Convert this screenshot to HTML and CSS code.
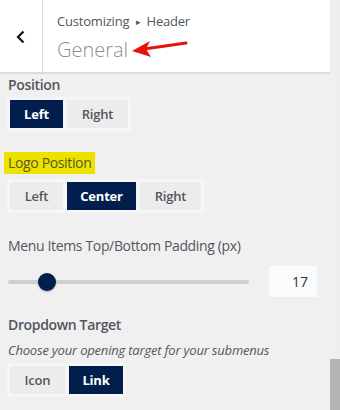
FILE: index.html
```html
<!DOCTYPE html>
<html>
<head>
<meta charset="utf-8">
<link rel="stylesheet" href="styles.css">
</head>
<body>
<div class="frame">
  <div class="panel">
    <header class="head">
      <div class="back">
        <svg width="12" height="16" viewBox="0 0 12 16"><path d="M8.5 2.5 L3 8 L8.5 13.5" fill="none" stroke="#111" stroke-width="2.2"/></svg>
      </div>
      <div class="titles">
        <div class="crumb">Customizing <span class="tri">▸</span> Header</div>
        <div class="title">General</div>
      </div>
      <svg class="arrow" width="60" height="20" viewBox="0 0 60 20"><path d="M56 3 L14 9" stroke="#e8120c" stroke-width="3" stroke-linecap="round"/><path d="M2 11 L20 1 L16 9 L21 17 Z" fill="#e8120c"/></svg>
    </header>

    <section class="ctl c-pos">
      <div class="label">Position</div>
      <div class="group">
        <span class="btn on w53">Left</span>
        <span class="btn w61">Right</span>
      </div>
    </section>

    <section class="ctl c-logo">
      <div class="label"><span class="hl">Logo Position</span></div>
      <div class="group">
        <span class="btn w53">Left</span>
        <span class="btn on w69">Center</span>
        <span class="btn w61">Right</span>
      </div>
    </section>

    <section class="ctl c-slider">
      <div class="label">Menu Items Top/Bottom Padding (px)</div>
      <div class="slider-row">
        <div class="track"><span class="thumb"></span></div>
        <div class="num">17</div>
      </div>
    </section>

    <section class="ctl c-drop">
      <div class="label">Dropdown Target</div>
      <div class="desc">Choose your opening target for your submenus</div>
      <div class="group">
        <span class="btn w55">Icon</span>
        <span class="btn on w54">Link</span>
      </div>
    </section>
  </div>
  <div class="scroll"><span class="sthumb"></span></div>
</div>
</body>
</html>
```

FILE: styles.css
```css
* { box-sizing: border-box; }
html, body { margin: 0; padding: 0; }
body {
  width: 340px;
  height: 410px;
  overflow: hidden;
  background: #f0f0f1;
  font-family: "Open Sans", "Noto Sans", sans-serif;
  color: #50575e;
}
.frame { display: flex; width: 340px; height: 410px; }
.panel { width: 330px; display: flex; flex-direction: column; }
.scroll { width: 10px; display: flex; flex-direction: column; background: #efefef; }
.sthumb { margin-top: auto; height: 51px; background: #b3b3b3; display: block; }

.head {
  position: relative;
  height: 74px;
  background: #fff;
  border-bottom: 2px solid #dcdcde;
  display: flex;
}
.back {
  width: 43px;
  border-right: 1px solid #dcdcde;
  display: flex;
  align-items: center;
  justify-content: center;
  padding-top: 2px;
}
.titles { padding: 11px 0 0 14px; }
.crumb { font-size: 13px; line-height: 20px; color: #50575e; letter-spacing: -0.2px; }
.tri { font-size: 9px; display: inline-block; vertical-align: 1px; margin: 0 3px; }
.title { font-size: 20px; line-height: 26px; color: #8c8f94; font-weight: 300; margin-top: 5px; }
.arrow { position: absolute; left: 130px; top: 40px; }

.ctl { padding: 0 0 0 7px; }
.label { font-size: 14px; font-weight: 600; line-height: 20px; padding-left: 1px; letter-spacing: -0.35px; }
.c-pos { padding-top: 0; }
.c-pos .label { margin-top: 1px; }
.c-pos .group { margin-top: 2px; }
.c-logo { margin-top: 21px; }
.c-logo .label { margin-left: -4px; }
.hl { background: #ede100; color: #585a1c; display: inline-block; padding: 1px 4px 1px 4px; line-height: 20px; font-weight: 400; }
.c-logo .group { margin-top: 5px; }

.group {
  display: inline-flex;
  gap: 4px;
  padding: 3px;
  background: #f6f6fa;
}
.btn {
  height: 28px;
  display: flex;
  align-items: center;
  justify-content: center;
  font-size: 13px;
  font-weight: 600;
  background: #ececec;
  color: #50575e;
  letter-spacing: -0.2px;
}
.btn.on { background: #021e4c; color: #fff; font-weight: 700; }
.w53 { width: 53px; }
.w61 { width: 61px; }
.w69 { width: 69px; }
.w55 { width: 55px; }
.w54 { width: 54px; }

.c-slider { margin-top: 23px; }
.c-slider .label { font-weight: 400; }
.slider-row { display: flex; align-items: center; margin-top: 10px; }
.track {
  position: relative;
  margin-left: 1px;
  width: 241px;
  height: 4px;
  border-radius: 2px;
  background: #cfcfcf;
}
.thumb {
  position: absolute;
  left: 30px;
  top: -7px;
  width: 18px;
  height: 18px;
  border-radius: 50%;
  background: #021e4c;
  box-shadow: 0 1px 2px rgba(0,0,0,.25);
}
.num {
  margin-left: 20px;
  width: 48px;
  height: 31px;
  background: #fafbfd;
  font-size: 14px;
  color: #333;
  text-align: right;
  padding-right: 9px;
  line-height: 31px;
  font-family: "Open Sans", sans-serif;
}

.c-drop { margin-top: 18px; }
.desc { font-size: 13px; font-style: italic; line-height: 18px; margin-top: 6px; padding-left: 1px; letter-spacing: -0.2px; }
.c-drop .group { margin-top: 4px; }
```
